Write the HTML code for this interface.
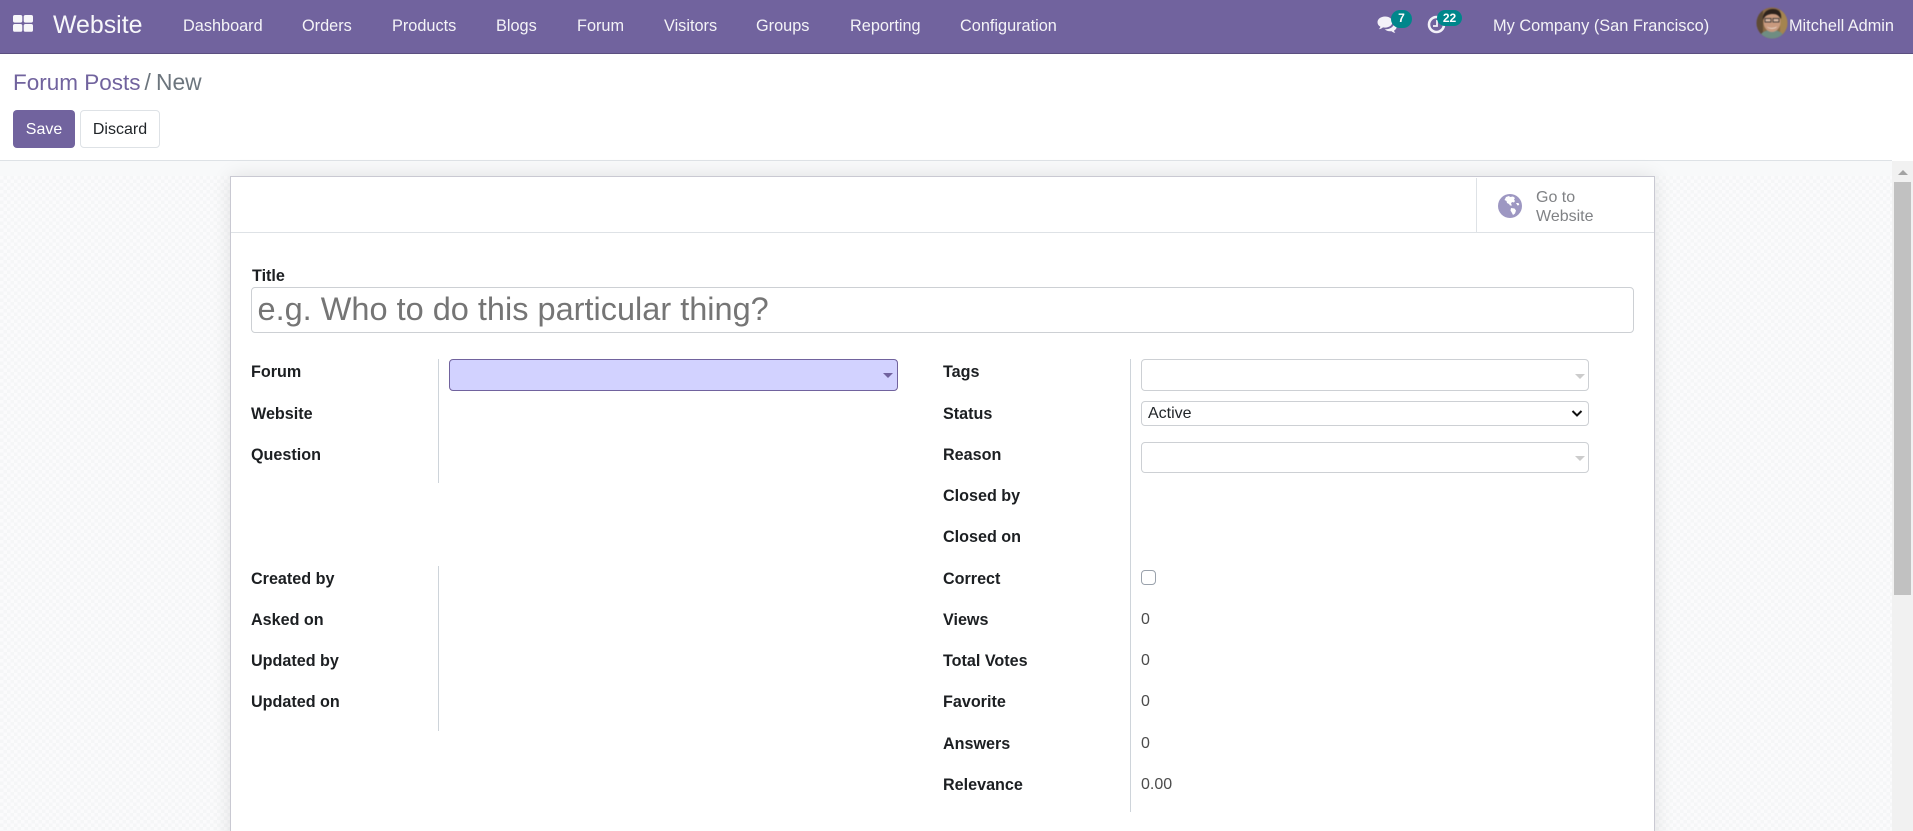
<!DOCTYPE html>
<html><head><meta charset="utf-8"><title>Forum Posts / New</title>
<style>
html,body{margin:0;padding:0;width:1913px;height:831px;overflow:hidden;background:#fff;font-family:"Liberation Sans",Arial,sans-serif;font-size:16px;color:#212529}
#w{position:relative;width:1913px;height:831px;overflow:hidden}
.a{position:absolute}
.t{position:absolute;line-height:20px;height:20px;white-space:nowrap}
.n{color:rgba(255,255,255,.92);font-size:16.3px;margin-top:1px}
.b{font-weight:bold;color:#1c1f22;font-size:16.15px;margin-top:1px}
.v{color:#4c4c4c;margin-top:1px}
.box{position:absolute;box-sizing:border-box;background:#fff;border:1px solid #cdd0d4;border-radius:4px}
.caret{position:absolute;width:0;height:0;border-left:5px solid transparent;border-right:5px solid transparent;border-top:5px solid #ccc}
.line{position:absolute;width:1px;background:#ced4da}
</style></head>
<body><div id="w">
<!-- navbar -->
<div class="a" style="left:0;top:0;width:1913px;height:53px;background:#71639e;border-bottom:1px solid #5b4f80"></div>
<svg class="a" style="left:13px;top:15px" width="20" height="17" viewBox="0 0 20 17"><g fill="#fff" opacity=".95"><rect x="0" y="0" width="9.3" height="7.6" rx="1.8"/><rect x="10.7" y="0" width="9.3" height="7.6" rx="1.8"/><rect x="0" y="9" width="9.3" height="7.8" rx="1.8"/><rect x="10.7" y="9" width="9.3" height="7.8" rx="1.8"/></g></svg>
<div class="t" style="left:53px;top:15px;font-size:24.9px;color:#fff;opacity:.95">Website</div>
<div class="t n" style="left:183px;top:15px">Dashboard</div>
<div class="t n" style="left:302px;top:15px">Orders</div>
<div class="t n" style="left:392px;top:15px">Products</div>
<div class="t n" style="left:496px;top:15px">Blogs</div>
<div class="t n" style="left:577px;top:15px">Forum</div>
<div class="t n" style="left:664px;top:15px">Visitors</div>
<div class="t n" style="left:756px;top:15px">Groups</div>
<div class="t n" style="left:850px;top:15px">Reporting</div>
<div class="t n" style="left:960px;top:15px">Configuration</div>

<svg class="a" style="left:1377px;top:16px" width="21" height="18" viewBox="0 0 21 18"><g fill="#f3f1f8"><path d="M8 .5C3.8 .5 .5 3 .5 6.2c0 1.9 1.1 3.5 2.9 4.5-.3 1-.9 1.8-1.6 2.5 1.6-.2 3.1-.8 4.2-1.800.6.1 1.3.2 2 .2 4.2 0 7.5-2.5 7.5-5.600S12.200.5 8 .5z"/><path d="M17 5.500c.1.4.2.8.2 1.200 0 3.700-3.900 6.500-8.300 6.500-.4 0-.8 0-1.200-.1 1.200 1.400 3.200 2.200 5.300 2.200.6 0 1.100 0 1.600-.1 1 .9 2.300 1.500 3.800 1.700-.6-.6-1.200-1.400-1.400-2.300 1.700-.9 2.800-2.400 2.800-4.100 0-1.800-1.100-3.300-2.800-4z"/></g></svg>
<div class="a" style="left:1391px;top:10px;width:21px;height:18px;border-radius:9px;background:#00868b;color:#fff;font-size:12px;font-weight:bold;text-align:center;line-height:17px">7</div>
<svg class="a" style="left:1427px;top:15px" width="19" height="19" viewBox="0 0 19 19"><circle cx="9.500" cy="9.500" r="7.500" fill="none" stroke="#f3f1f8" stroke-width="2.600"/><path d="M10 5v6H6" fill="none" stroke="#f3f1f8" stroke-width="1.800"/></svg>
<div class="a" style="left:1437px;top:10px;width:25px;height:16px;border-radius:8px;background:#00868b;color:#fff;font-size:12px;font-weight:bold;text-align:center;line-height:16px">22</div>
<div class="t n" style="left:1493px;top:15px;font-size:16.35px">My Company (San Francisco)</div>
<svg class="a" style="left:1756px;top:7px;filter:blur(.4px)" width="32" height="32" viewBox="0 0 32 32"><defs><clipPath id="c"><circle cx="16" cy="16" r="15.500"/></clipPath></defs><g clip-path="url(#c)"><rect width="32" height="32" fill="#8a6a45"/><rect x="0" y="0" width="7" height="32" fill="#5e4a34"/><rect x="24" y="0" width="8" height="32" fill="#a5844f"/><path d="M3 32c1-7 7-9 13-9s11 2 13 9z" fill="#6f8d82"/><ellipse cx="16" cy="15" rx="8.500" ry="10" fill="#c99a7f"/><path d="M7 13c-1-7 4-11 10-11s9 4 8 10c-2-3-4-5-8-5s-8 1-10 6z" fill="#2c221c"/><rect x="9" y="11.500" width="6" height="3.500" fill="#d9b8a4" stroke="#3a3533" stroke-width=".9"/><rect x="17" y="11.500" width="6" height="3.500" fill="#d9b8a4" stroke="#3a3533" stroke-width=".9"/><path d="M11 19.500c2 2 7 2 10 0-1 3-9 3-10 0z" fill="#efe3da"/></g></svg>
<div class="t n" style="left:1789px;top:15px">Mitchell Admin</div>

<!-- control panel -->
<div class="t" style="left:13px;top:73px;font-size:22.5px;color:#71639e">Forum Posts</div>
<div class="t" style="left:144.500px;top:72px;font-size:22.8px;color:#6c757d">/</div>
<div class="t" style="left:156px;top:72px;font-size:22.8px;color:#6c757d">New</div>
<div class="a" style="left:13px;top:110px;width:62px;height:38px;background:#71639e;border-radius:4px;color:#fff;text-align:center;line-height:40px">Save</div>
<div class="a" style="left:80px;top:110px;width:80px;height:38px;box-sizing:border-box;background:#fff;border:1px solid #dee2e6;border-radius:4px;color:#212529;text-align:center;line-height:38px">Discard</div>

<!-- content background -->
<div class="a" style="left:0;top:160px;width:1892px;height:671px;background:#f8f9fa;border-top:1px solid #dee2e6;box-sizing:border-box"></div>
<div class="a" style="left:0;top:176px;width:1892px;height:655px;background-color:#fbfbfc;background-image:conic-gradient(#f5f6f7 25%,transparent 0 50%,#f5f6f7 0 75%,transparent 0);background-size:7px 7px"></div>

<!-- scrollbar -->
<div class="a" style="left:1892px;top:161px;width:21px;height:670px;background:#f1f1f1"></div>
<div class="a" style="left:1894px;top:182px;width:17px;height:413px;background:#c1c1c1"></div>
<div class="a" style="left:1898px;top:170px;width:0;height:0;border-left:5px solid transparent;border-right:5px solid transparent;border-bottom:5px solid #a3a3a3"></div>

<!-- sheet -->
<div class="a" style="left:230px;top:176px;width:1425px;height:670px;box-sizing:border-box;background:#fff;border:1px solid #c9c9d2;box-shadow:0 0 18px rgba(0,0,0,.1)"></div>
<div class="a" style="left:231px;top:232px;width:1423px;height:1px;background:#dee2e6"></div>
<div class="a" style="left:1476px;top:178px;width:1px;height:54px;background:#dee2e6"></div>
<svg class="a" style="left:1498px;top:194px" width="24" height="24" viewBox="0 0 24 24"><circle cx="12" cy="12" r="12" fill="#9d97c2"/><path d="M8 3l3-1 1 1 3-.5 2 1.500-1 1.500 1 1.500-1 1.500-2-.5-1 1.500 1 2-2 0-1-1.500-2-1-.5-2L6.500 6z" fill="#fff"/><path d="M13 14l3.500.5 1.500 2-1 3-2 1.500-1-2-1.500-2.500z" fill="#fff"/><path d="M18 9l2.500 0 .8 2-1.800.5z" fill="#fff"/></svg>
<div class="t" style="left:1536px;top:188px;color:#808285">Go to</div>
<div class="t" style="left:1536px;top:207px;color:#808285">Website</div>

<div class="t b" style="left:252px;top:265px">Title</div>
<div class="box" style="left:251px;top:287px;width:1383px;height:46px"></div>
<div class="t" style="left:257.500px;top:288px;font-size:32.5px;line-height:42px;height:42px;color:#757575">e.g. Who to do this particular thing?</div>

<div class="t b" style="left:251px;top:361px">Forum</div>
<div class="t b" style="left:251px;top:403px">Website</div>
<div class="t b" style="left:251px;top:444px">Question</div>
<div class="t b" style="left:251px;top:568px">Created by</div>
<div class="t b" style="left:251px;top:609px">Asked on</div>
<div class="t b" style="left:251px;top:650px">Updated by</div>
<div class="t b" style="left:251px;top:691px">Updated on</div>
<div class="line" style="left:438px;top:359px;height:124px"></div>
<div class="line" style="left:438px;top:566px;height:165px"></div>
<div class="box" style="left:449px;top:359px;width:449px;height:32px;background:#d2d2ff;border-color:#71639e"></div>
<div class="caret" style="left:883px;top:373px;border-top-color:#71639e"></div>

<div class="t b" style="left:943px;top:361px">Tags</div>
<div class="t b" style="left:943px;top:403px">Status</div>
<div class="t b" style="left:943px;top:444px">Reason</div>
<div class="t b" style="left:943px;top:485px">Closed by</div>
<div class="t b" style="left:943px;top:526px">Closed on</div>
<div class="t b" style="left:943px;top:568px">Correct</div>
<div class="t b" style="left:943px;top:609px">Views</div>
<div class="t b" style="left:943px;top:650px">Total Votes</div>
<div class="t b" style="left:943px;top:691px">Favorite</div>
<div class="t b" style="left:943px;top:733px">Answers</div>
<div class="t b" style="left:943px;top:774px">Relevance</div>
<div class="line" style="left:1130px;top:359px;height:453px"></div>
<div class="box" style="left:1141px;top:359px;width:448px;height:32px"></div>
<div class="caret" style="left:1575px;top:374px"></div>
<div class="box" style="left:1141px;top:401px;width:448px;height:25px"></div>
<div class="t" style="left:1148px;top:404px;color:#212529">Active</div>
<svg class="a" style="left:1571px;top:409px" width="12" height="9" viewBox="0 0 12 9"><path d="M1.500 2L6 6.500 10.500 2" fill="none" stroke="#111" stroke-width="2"/></svg>
<div class="box" style="left:1141px;top:442px;width:448px;height:31px"></div>
<div class="caret" style="left:1575px;top:456px"></div>
<div class="box" style="left:1141px;top:570px;width:15px;height:15px;border-color:#9aa2ac"></div>
<div class="t v" style="left:1141px;top:609px">0</div>
<div class="t v" style="left:1141px;top:650px">0</div>
<div class="t v" style="left:1141px;top:691px">0</div>
<div class="t v" style="left:1141px;top:733px">0</div>
<div class="t v" style="left:1141px;top:774px">0.00</div>
</div></body></html>
